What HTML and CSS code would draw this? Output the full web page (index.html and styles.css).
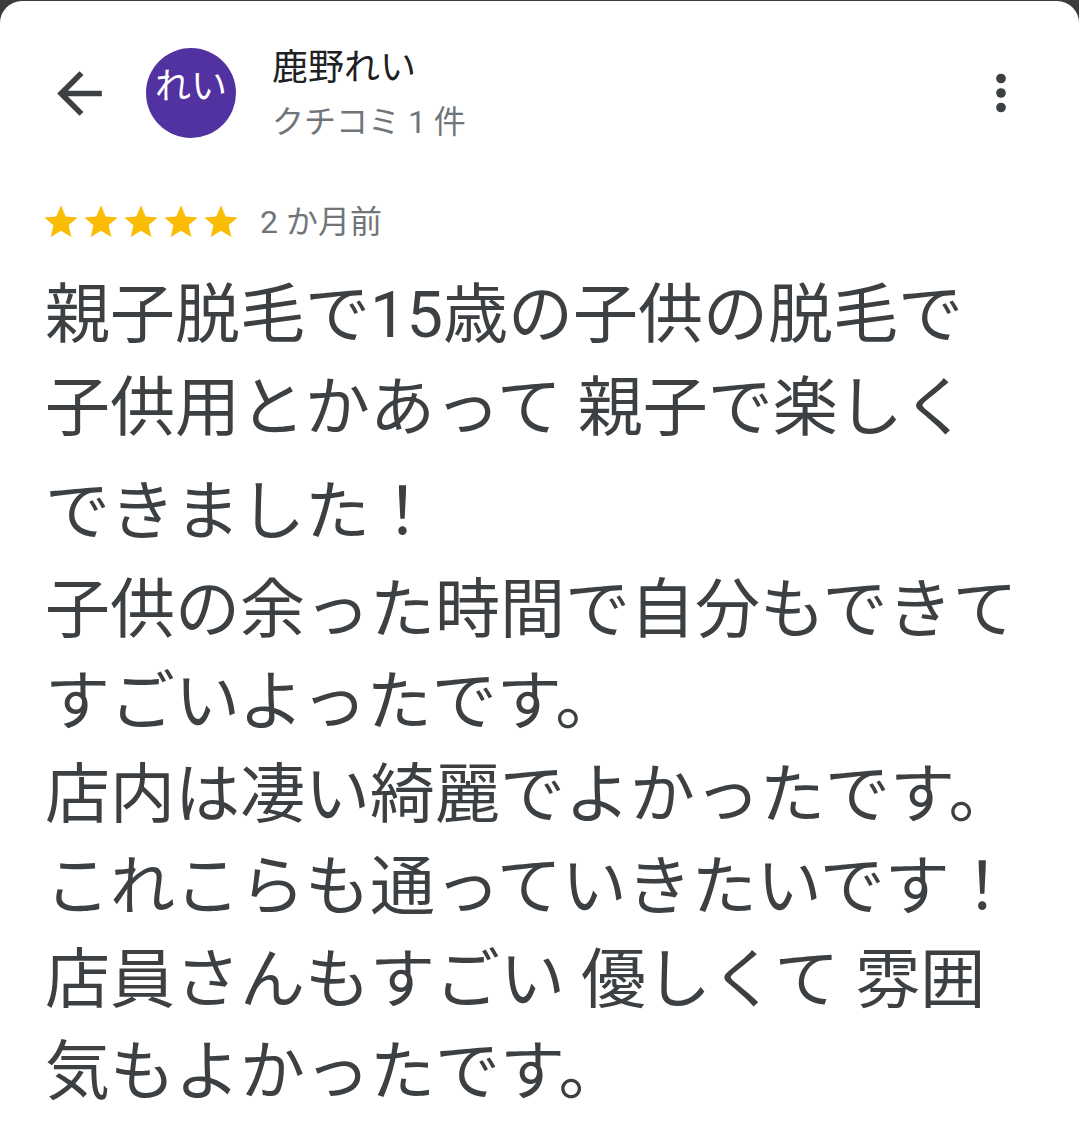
FILE: index.html
```html
<!DOCTYPE html>
<html lang="ja">
<head>
<meta charset="utf-8">
<link rel="stylesheet" href="styles.css">
</head>
<body>
<div class="card">
  <header class="header">
    <div class="back">
      <svg viewBox="0 0 24 24" width="67" height="67"><path d="M20 11H7.830l5.59-5.59L12 4l-8 8 8 8 1.41-1.41L7.83 13H20v-2z" fill="#3c4043"/></svg>
    </div>
    <div class="avatar"><span>れい</span></div>
    <div class="who">
      <div class="name">鹿野れい</div>
      <div class="sub">クチコミ 1 件</div>
    </div>
    <div class="more">
      <svg viewBox="0 0 24 24" width="58" height="58"><circle cx="12" cy="6" r="2" fill="#3c4043"/><circle cx="12" cy="12" r="2" fill="#3c4043"/><circle cx="12" cy="18" r="2" fill="#3c4043"/></svg>
    </div>
  </header>
  <div class="rating">
    <div class="stars">
      <svg viewBox="0 0 24 24" width="40" height="40"><path d="M12 17.27L18.18 21l-1.64-7.03L22 9.24l-7.19-.61L12 2 9.19 8.63 2 9.24l5.46 4.73L5.82 21z" fill="#fbbc04"/></svg>
      <svg viewBox="0 0 24 24" width="40" height="40"><path d="M12 17.27L18.18 21l-1.64-7.03L22 9.24l-7.19-.61L12 2 9.19 8.63 2 9.24l5.46 4.73L5.82 21z" fill="#fbbc04"/></svg>
      <svg viewBox="0 0 24 24" width="40" height="40"><path d="M12 17.27L18.18 21l-1.64-7.03L22 9.24l-7.19-.61L12 2 9.19 8.63 2 9.24l5.46 4.73L5.82 21z" fill="#fbbc04"/></svg>
      <svg viewBox="0 0 24 24" width="40" height="40"><path d="M12 17.27L18.18 21l-1.64-7.03L22 9.24l-7.19-.61L12 2 9.19 8.63 2 9.24l5.46 4.73L5.82 21z" fill="#fbbc04"/></svg>
      <svg viewBox="0 0 24 24" width="40" height="40"><path d="M12 17.27L18.18 21l-1.64-7.03L22 9.24l-7.19-.61L12 2 9.19 8.63 2 9.24l5.46 4.73L5.82 21z" fill="#fbbc04"/></svg>
    </div>
    <span class="date">2 か月前</span>
  </div>
  <div class="review">
    <div class="line">親子脱毛で15歳の子供の脱毛で</div>
    <div class="line">子供用とかあって 親子で楽しく</div>
    <div class="line line-tall">できました！</div>
    <div class="line">子供の余った時間で自分もできて</div>
    <div class="line">すごいよったです。</div>
    <div class="line">店内は凄い綺麗でよかったです。</div>
    <div class="line">これこらも通っていきたいです！</div>
    <div class="line">店員さんもすごい 優しくて 雰囲</div>
    <div class="line">気もよかったです。</div>
  </div>
</div>
</body>
</html>
```

FILE: styles.css
```css
html, body {
  margin: 0;
  padding: 0;
}
body {
  background: #3b3b3b;
  width: 1079px;
  height: 1137px;
  overflow: hidden;
  font-family: Roboto, "Noto Sans CJK JP", sans-serif;
}
.card {
  margin-top: 1px;
  background: #fff;
  border-radius: 22px 22px 0 0;
  height: 1136px;
}
.header {
  display: flex;
  align-items: center;
  padding: 46px 49px 0 46px;
  height: 92px;
}
.back {
  width: 67px;
  height: 67px;
  display: flex;
}
.avatar {
  width: 90px;
  height: 90px;
  border-radius: 50%;
  background: #5232a0;
  margin-left: 33px;
  display: flex;
  align-items: center;
  justify-content: center;
  color: #fff;
  font-size: 36px;
  line-height: 1;
}
.avatar span {
  padding-bottom: 12px;
}
.who {
  margin-left: 36px;
  flex: 1;
  display: flex;
  flex-direction: column;
}
.name {
  font-size: 36px;
  line-height: 46px;
  color: #202124;
}
.sub {
  font-size: 32px;
  line-height: 46px;
  padding-top: 8px;
  margin-bottom: -4px;
  color: #70757a;
}
.more {
  width: 58px;
  height: 58px;
  display: flex;
}
.rating {
  display: flex;
  align-items: center;
  margin-top: 63px;
  padding-left: 41px;
  height: 40px;
}
.stars {
  display: flex;
}
.stars svg {
  display: block;
}
.date {
  margin-left: 19px;
  font-size: 32px;
  line-height: 40px;
  color: #70757a;
}
.review {
  margin-top: 27px;
  padding-left: 45px;
  color: #3c4043;
  font-size: 65px;
  line-height: 92.5px;
  white-space: nowrap;
}
.line-tall {
  margin-top: 12px;
  margin-bottom: 5px;
}
```
